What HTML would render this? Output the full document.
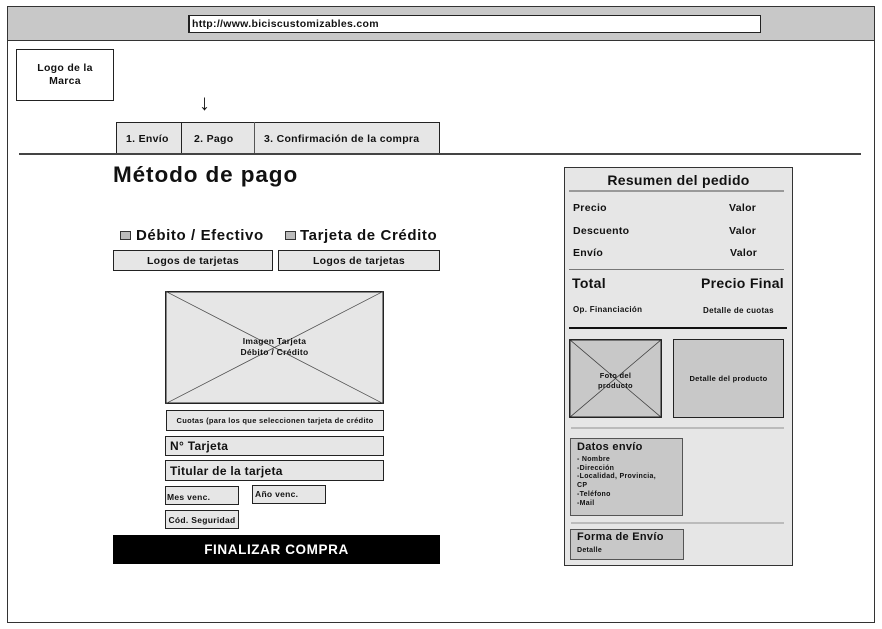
<!DOCTYPE html>
<html><head><meta charset="utf-8"><style>
*{margin:0;padding:0;box-sizing:border-box}
body{width:882px;height:629px;background:#fff;position:relative;font-family:"Liberation Sans","DejaVu Sans",sans-serif;font-weight:bold;color:#111;overflow:hidden;letter-spacing:.3px}
.a{position:absolute}
.bx{position:absolute;border:1.5px solid #222;background:#e6e6e6;display:flex;align-items:center;justify-content:center;text-align:center}
.t{position:absolute;white-space:nowrap}
</style></head><body>
<div class="a" style="left:7px;top:6px;width:868px;height:617px;border:1px solid #333"></div>
<div class="a" style="left:8px;top:7px;width:866px;height:34px;background:#c8c8c8;border-bottom:1.5px solid #333"></div>
<div class="a" style="left:188px;top:15px;width:573px;height:18px;background:#fff;border:1px solid #222;border-left-width:2px;font-size:10.5px;padding:2px 0 0 2px">http://www.biciscustomizables.com</div>
<div class="bx" style="left:16px;top:49px;width:98px;height:52px;background:#fff;font-size:10.5px;line-height:13px">Logo de la<br>Marca</div>
<div class="t" style="left:199px;top:90px;font-size:22px;font-weight:normal">↓</div>
<div class="a" style="left:116px;top:122px;width:324px;height:32px;background:#e6e6e6;border:1px solid #222;border-bottom:none"></div>
<div class="a" style="left:181px;top:122px;width:1px;height:32px;background:#222"></div>
<div class="a" style="left:254px;top:122px;width:1px;height:32px;background:#555"></div>
<div class="t" style="left:126px;top:133px;font-size:10.5px">1. Envío</div>
<div class="t" style="left:194px;top:133px;font-size:10.5px">2. Pago</div>
<div class="t" style="left:264px;top:133px;font-size:10.5px">3. Confirmación de la compra</div>
<div class="a" style="left:19px;top:153px;width:842px;height:2px;background:#444"></div>
<div class="t" style="left:113px;top:162px;font-size:22.5px;letter-spacing:.9px">Método de pago</div>
<div class="a" style="left:120px;top:231px;width:11px;height:9px;background:#bbb;border:1px solid #333"></div>
<div class="t" style="left:136px;top:227px;font-size:15px;letter-spacing:.6px">Débito / Efectivo</div>
<div class="a" style="left:285px;top:231px;width:11px;height:9px;background:#bbb;border:1px solid #333"></div>
<div class="t" style="left:300px;top:227px;font-size:15px;letter-spacing:.6px">Tarjeta de Crédito</div>
<div class="bx" style="left:113px;top:250px;width:160px;height:21px;font-size:10.5px">Logos de tarjetas</div>
<div class="bx" style="left:278px;top:250px;width:162px;height:21px;font-size:10.5px">Logos de tarjetas</div>
<svg class="a" style="left:165px;top:291px" width="219" height="113"><rect x="0.75" y="0.75" width="217.5" height="111.5" fill="#e6e6e6" stroke="#222" stroke-width="1.5"/><line x1="0" y1="0" x2="219" y2="113" stroke="#444" stroke-width=".7"/><line x1="219" y1="0" x2="0" y2="113" stroke="#444" stroke-width=".7"/></svg>
<div class="t" style="left:165px;width:219px;top:336px;text-align:center;font-size:8.5px;line-height:11px">Imagen Tarjeta<br>Débito / Crédito</div>
<div class="bx" style="left:166px;top:410px;width:218px;height:21px;font-size:7.5px">Cuotas (para los que seleccionen tarjeta de crédito</div>
<div class="bx" style="left:165px;top:436px;width:219px;height:20px;font-size:12px;justify-content:flex-start;padding-left:4px">N° Tarjeta</div>
<div class="bx" style="left:165px;top:460px;width:219px;height:21px;font-size:12px;justify-content:flex-start;padding-left:4px">Titular de la tarjeta</div>
<div class="bx" style="left:165px;top:486px;width:74px;height:19px;font-size:8.5px;justify-content:flex-start;padding:3px 0 0 1px">Mes venc.</div>
<div class="bx" style="left:252px;top:485px;width:74px;height:19px;font-size:8.5px;justify-content:flex-start;align-items:flex-start;padding:3px 0 0 2px">Año venc.</div>
<div class="bx" style="left:165px;top:510px;width:74px;height:19px;font-size:8.5px">Cód. Seguridad</div>
<div class="bx" style="left:113px;top:535px;width:327px;height:29px;background:#000;border:none;color:#fff;font-size:13.5px;letter-spacing:.6px">FINALIZAR COMPRA</div>

<div class="a" style="left:564px;top:167px;width:229px;height:399px;background:#e6e6e6;border:1.5px solid #333"></div>
<div class="t" style="left:564px;width:229px;top:172px;text-align:center;font-size:14px">Resumen del pedido</div>
<div class="a" style="left:569px;top:190px;width:215px;height:1.5px;background:#999"></div>
<div class="t" style="left:573px;top:202px;font-size:10.5px">Precio</div><div class="t" style="left:729px;top:202px;font-size:10.5px">Valor</div>
<div class="t" style="left:573px;top:225px;font-size:10.5px">Descuento</div><div class="t" style="left:729px;top:225px;font-size:10.5px">Valor</div>
<div class="t" style="left:573px;top:247px;font-size:10.5px">Envío</div><div class="t" style="left:730px;top:247px;font-size:10.5px">Valor</div>
<div class="a" style="left:569px;top:269px;width:215px;height:1px;background:#777"></div>
<div class="t" style="left:572px;top:275px;font-size:14px">Total</div>
<div class="t" style="right:98px;top:275px;font-size:14px">Precio Final</div>
<div class="t" style="left:573px;top:305px;font-size:8px">Op. Financiación</div>
<div class="t" style="left:703px;top:306px;font-size:8px">Detalle de cuotas</div>
<div class="a" style="left:569px;top:327px;width:218px;height:1.5px;background:#111"></div>
<svg class="a" style="left:569px;top:339px" width="93" height="79"><rect x="0.75" y="0.75" width="91.5" height="77.5" fill="#c8c8c8" stroke="#222" stroke-width="1.5"/><line x1="0" y1="0" x2="93" y2="79" stroke="#333" stroke-width=".7"/><line x1="93" y1="0" x2="0" y2="79" stroke="#333" stroke-width=".7"/></svg>
<div class="t" style="left:569px;width:93px;top:371px;text-align:center;font-size:7.5px;line-height:10px">Foto del<br>producto</div>
<div class="bx" style="left:673px;top:339px;width:111px;height:79px;background:#c8c8c8;font-size:7.5px">Detalle del producto</div>
<div class="a" style="left:571px;top:427px;width:213px;height:2px;background:#bbb"></div>
<div class="a" style="left:570px;top:438px;width:113px;height:78px;background:#c8c8c8;border:1px solid #555"></div>
<div class="t" style="left:577px;top:441px;font-size:11px">Datos envío</div>
<div class="t" style="left:577px;top:456px;font-size:7px;line-height:8.7px">- Nombre<br>-Dirección<br>-Localidad, Provincia,<br>CP<br>-Teléfono<br>-Mail</div>
<div class="a" style="left:571px;top:522px;width:213px;height:1.5px;background:#bbb"></div>
<div class="a" style="left:570px;top:529px;width:114px;height:31px;background:#c8c8c8;border:1px solid #555"></div>
<div class="t" style="left:577px;top:531px;font-size:11px">Forma de Envío</div>
<div class="t" style="left:577px;top:547px;font-size:7px">Detalle</div>
</body></html>
